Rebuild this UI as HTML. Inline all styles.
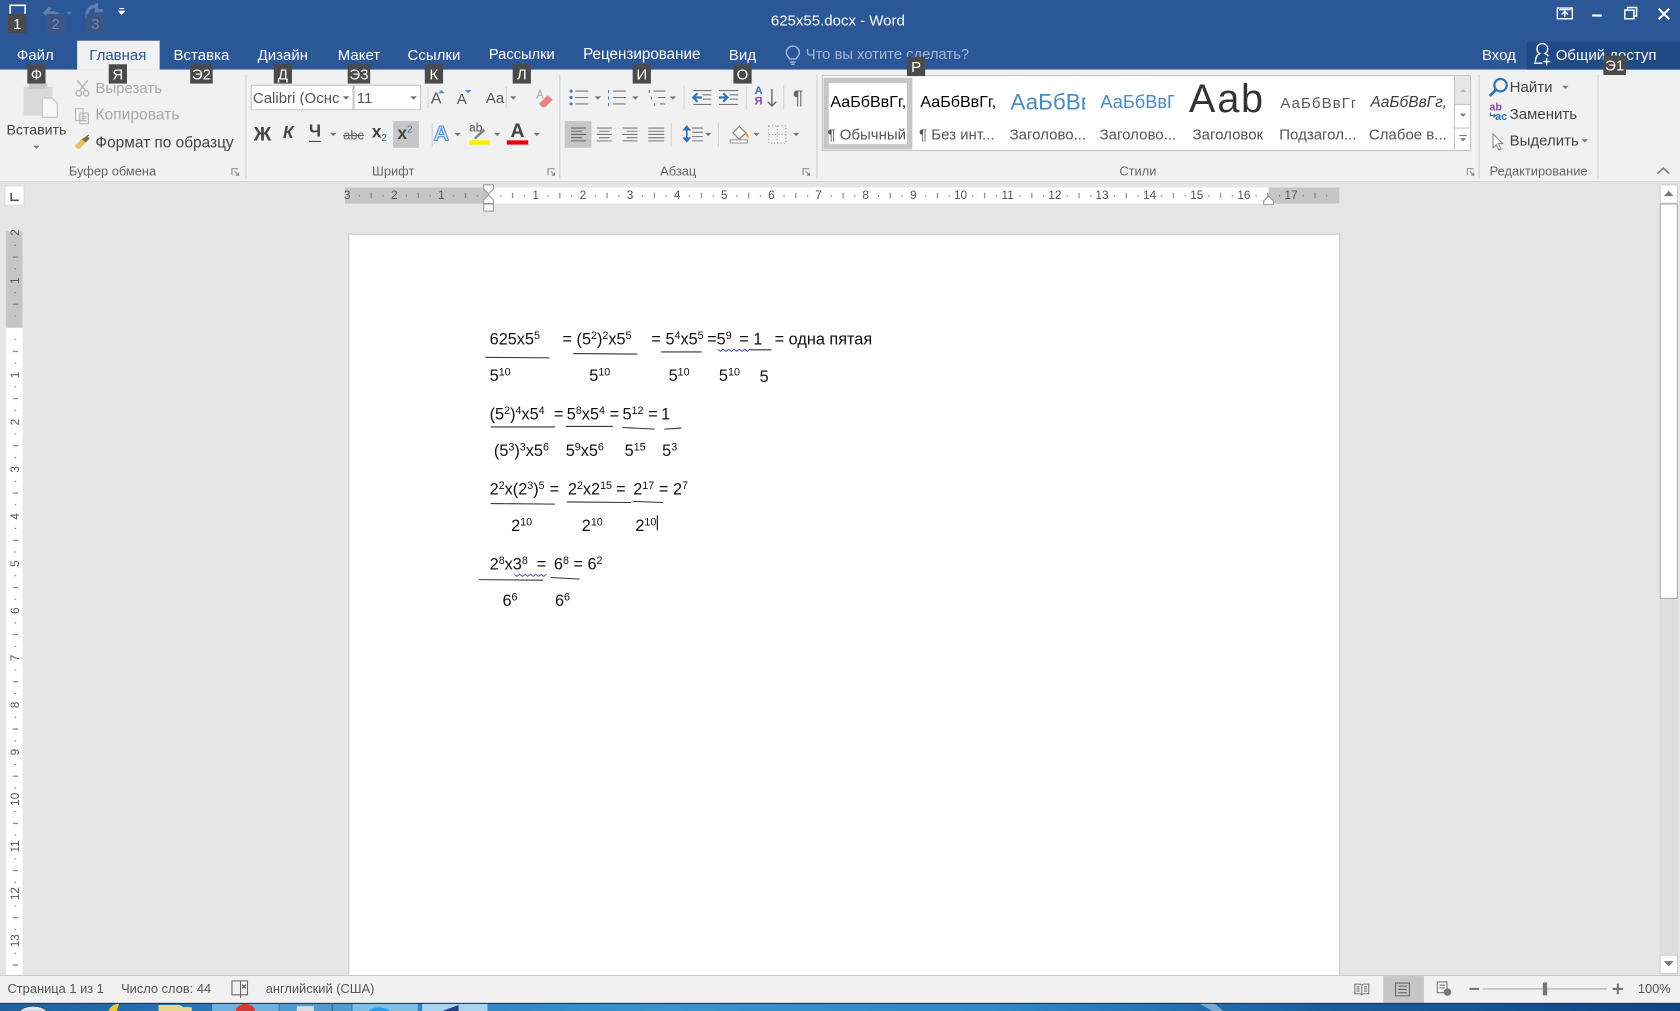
<!DOCTYPE html>
<html lang="ru"><head><meta charset="utf-8"><title>625x55.docx - Word</title>
<style>
html,body{margin:0;padding:0;width:1680px;height:1011px;overflow:hidden;background:#e6e6e6}
#root{position:absolute;left:0;top:0;width:1568px;height:944px;overflow:hidden;transform:scale(1.0714286);transform-origin:0 0;font-family:"Liberation Sans",sans-serif;color:#444;background:#e6e6e6}
.b{position:absolute}
.t,.l{position:absolute;white-space:nowrap;line-height:1}
.t{transform:translate(-50%,-50%)}
.l{transform:translateY(-50%)}
svg.o{position:absolute;left:0;top:0}
.tab{font-size:14px;color:#fff}
.k{position:absolute;transform:translate(-50%,-50%);background:#4a4a4a;color:#fff;font-size:14px;height:18px;line-height:18px;min-width:17px;text-align:center;white-space:nowrap}
.f{background:#3b5684;color:#6d87b0}
.g{font-size:12px;color:#666}
.s{font-size:14px;color:#555}
.dis{font-size:14px;color:#a9a9a9}
.d{position:absolute;white-space:nowrap;line-height:1;transform:translateY(-50%);font-size:15.200px;color:#111}
.d sup{font-size:10px;vertical-align:5px;line-height:0}
.rn{font-size:11px;color:#555}
.rv{font-size:11px;color:#555;transform:translate(-50%,-50%) rotate(-90deg)}
.st{font-size:12px;color:#555}
</style></head><body><div id="root">

<!-- title bar & ribbon backgrounds -->
<div class="b" style="left:0;top:0;width:1568px;height:65px;background:#2b5797"></div>
<div class="b" style="left:0;top:65px;width:1568px;height:104px;background:#f1f1f1"></div>
<div class="b" style="left:0;top:169px;width:1568px;height:1px;background:#d6d6d6"></div>
<div class="b" style="left:72px;top:38px;width:77px;height:27px;background:#f1f1f1"></div>
<div class="b" style="left:1425px;top:39px;width:143px;height:26px;background:#1f4a85"></div>

<!-- page -->
<div class="b" style="left:325px;top:218px;width:924px;height:693px;background:#fff;border:1px solid #c6c6c6;border-bottom:0"></div>

<!-- status & taskbar -->
<div class="b" style="left:0;top:910px;width:1568px;height:1px;background:#c8c8c8"></div>
<div class="b" style="left:0;top:911px;width:1568px;height:25px;background:#f1f1f1"></div>
<div class="b" style="left:1291px;top:911px;width:38px;height:25px;background:#c6c6c6"></div>
<div class="b" style="left:0;top:936px;width:1568px;height:8px;background:linear-gradient(90deg,#1d5f9f 0,#2a7ab8 15%,#3b93cc 40%,#2f87c4 60%,#1b5f9f 78%,#0f4584 100%);border-top:1px solid #0c2f55;box-sizing:border-box"></div>

<svg class="o" width="1568" height="944" viewBox="0 0 1568 944" fill="none">
<defs>
<pattern id="hp" patternUnits="userSpaceOnUse" x="456" y="176" width="44.05" height="16">
<rect x="11" y="6" width="1" height="1.500" fill="#777"/><rect x="22" y="4" width="1" height="5" fill="#777"/><rect x="33" y="6" width="1" height="1.500" fill="#777"/>
</pattern>
<pattern id="vp" patternUnits="userSpaceOnUse" x="6" y="305.500" width="15" height="44.05">
<rect x="7.500" y="11" width="1.500" height="1" fill="#777"/><rect x="6" y="22" width="5" height="1" fill="#777"/><rect x="7.500" y="33" width="1.500" height="1" fill="#777"/>
</pattern>
</defs>

<!-- quick access -->
<path d="M9.500 13V5h14v8" stroke="#fff" stroke-width="1.500"/>
<path d="M57 21c1-6-3-9-8-9h-6M47 7l-5 5 5 5" stroke="#5f80b0" stroke-width="3"/>
<path d="M62 11h5l-2.500 3z" fill="#5f80b0"/>
<path d="M82 18c-3-7 2-13 9-12M90 3v7h6" stroke="#5f80b0" stroke-width="3"/>
<path d="M111 8h5M111 10.500h5l-2.500 3z" stroke="#fff" fill="#fff" stroke-width="1"/>

<!-- window controls -->
<path d="M1453.500 7.500h14v10h-14z" stroke="#fff" stroke-width="1.300"/><path d="M1455 9h11M1460.500 16v-5M1457.500 13.500l3-3 3 3" stroke="#fff" stroke-width="1.300"/>
<path d="M1486 14.500h9" stroke="#fff" stroke-width="2"/>
<path d="M1516.500 9.500h8.500v8h-8.500zM1519 9.500V7h8.500v8H1525" stroke="#fff" stroke-width="1.400"/>
<path d="M1548 8l10 10M1558 8l-10 10" stroke="#fff" stroke-width="2"/>

<!-- bulb & share icons -->
<path d="M737 55c-1-2-3-3-3-6a6 6 0 0 1 12 0c0 3-2 4-3 6zM737.500 58h5M738.500 60h3" stroke="#a9bcd8" stroke-width="1.300"/>
<path d="M1433 58c0-5 2-7 4-8a5 5 0 1 1 5 0c1.500.5 2.500 1.300 3.200 2.500M1431.500 59h8" stroke="#fff" stroke-width="1.300"/>
<path d="M1443.500 54v7M1440 57.500h7" stroke="#fff" stroke-width="1.300"/>

<!-- separators -->
<path d="M229.500 70v97M522.500 70v97M762.500 70v97M1380.500 70v97M1491.500 70v97" stroke="#d0d0d0"/>
<path d="M399.500 81v20M472.500 81v20M638.500 80v22M696.500 80v22M731.500 80v22M403.500 115v22M626.500 115v22M670.500 115v22" stroke="#d4d4d4"/>

<!-- paste -->
<rect x="22" y="81" width="27" height="27" fill="#d9d9d9"/><rect x="27" y="78" width="17" height="5" fill="#c8c8c8"/>
<path d="M39.500 91.500h9l5 5v13h-14z" fill="#f7f7f7" stroke="#c4c4c4"/>
<path d="M31 136l3 3 3-3z" fill="#777"/>
<!-- scissors -->
<g stroke="#b4b4b4" stroke-width="1.300"><path d="M72 75l8 10M82 75l-8 10"/><circle cx="73.500" cy="87" r="2.500"/><circle cx="80.500" cy="87" r="2.500"/></g>
<!-- copy -->
<path d="M70.500 101.500h7v11h-7zM74.500 105.500h8v10h-8zM76 108.500h5M76 110.500h5M76 112.500h5" stroke="#b4b4b4"/>
<!-- brush -->
<path d="M72 139l-2-3 6-6 4 3-6 6z" fill="#e9c05c"/><path d="M76 130l5-3 3 2-4 4z" fill="#8a6d3b"/><path d="M80 128l3-2" stroke="#666"/>

<!-- combos -->
<rect x="234.500" y="79.500" width="95" height="23" fill="#fff" stroke="#c6c6c6"/>
<rect x="330.500" y="79.500" width="62" height="23" fill="#fff" stroke="#c6c6c6"/>
<path d="M320 90h6l-3 3zM383 90h6l-3 3z" fill="#666"/>
<path d="M409 87l3-3 3 3zM434 84h6l-3 3z" fill="#4a90d0"/>
<path d="M476 90h6l-3 3z" fill="#777"/>
<!-- eraser -->
<path d="M503 97l8-8 5 4-7 7h-3z" fill="#e9808a"/><path d="M501 92l3-8 3 8M502.500 89h3" stroke="#aaa"/>

<!-- row 2 font arrows + highlight box -->
<rect x="367" y="113" width="24" height="25" fill="#c6c6c6"/>
<path d="M308 124h6l-3 3zM424 124h6l-3 3zM461 124h6l-3 3zM498 124h6l-3 3z" fill="#777"/>
<rect x="438" y="131" width="19" height="4" fill="#ffec00"/>
<path d="M442 129l9-9 2 2-9 8z" fill="#888"/>
<rect x="473" y="131" width="20" height="4" fill="#e60012"/>

<!-- bullets -->
<g fill="#4a7fc1"><circle cx="533" cy="85" r="1.500"/><circle cx="533" cy="91" r="1.500"/><circle cx="533" cy="97" r="1.500"/></g>
<path d="M537 85h12M537 91h12M537 97h12" stroke="#777"/>
<path d="M555 90h6l-3 3zM590 90h6l-3 3zM625 90h6l-3 3z" fill="#777"/>
<path d="M568 84v3M568 90v3M568 96v3" stroke="#4a7fc1"/>
<path d="M572 85h12M572 91h12M572 97h12" stroke="#777"/>
<path d="M606 84v3" stroke="#4a7fc1"/><path d="M610 85h11M614 91h7M616 97h5" stroke="#777"/><path d="M608 90v3" stroke="#a060b0"/><path d="M611 96v3" stroke="#888"/>
<!-- indent -->
<path d="M647 91h8M651 87l-4 4 4 4" stroke="#2e74b5" stroke-width="2"/><path d="M647 84.500h17M656 88.500h8M656 92.500h8M647 97.500h17" stroke="#777"/>
<path d="M671 91h8M675 87l4 4-4 4" stroke="#2e74b5" stroke-width="2"/><path d="M671 84.500h18M681 88.500h8M681 92.500h8M671 97.500h18" stroke="#777"/>
<!-- sort arrow -->
<path d="M720.500 83v16M716.500 95l4 4 4-4" stroke="#666" stroke-width="1.300"/>
<!-- alignment -->
<rect x="527" y="113" width="25" height="25" fill="#c6c6c6"/>
<path d="M533 119.500h14M533 122.500h10M533 125.500h14M533 128.500h10M533 131.500h14" stroke="#666"/>
<path d="M557 119.500h14M559 122.500h10M557 125.500h14M559 128.500h10M557 131.500h14" stroke="#777"/>
<path d="M581 119.500h14M585 122.500h10M581 125.500h14M585 128.500h10M581 131.500h14" stroke="#777"/>
<path d="M605 119.500h15M605 122.500h15M605 125.500h15M605 128.500h15M605 131.500h15" stroke="#777"/>
<!-- line spacing -->
<path d="M641 118v14M638.500 121l2.500-3 2.500 3zM638.500 129l2.500 3 2.500-3z" stroke="#2e74b5" stroke-width="1.500" fill="#2e74b5"/>
<path d="M646 119.500h10M646 123.500h10M646 127.500h10M646 131.500h10" stroke="#777"/>
<path d="M658 124h6l-3 3z" fill="#777"/>
<!-- shading -->
<path d="M684 124l6-6 6 6-6 6z" stroke="#777" fill="#fff"/><path d="M696 124c1 2 2 3 2 4" stroke="#e8a33d" stroke-width="2"/>
<rect x="681.500" y="130.500" width="16" height="3" fill="#fff" stroke="#999"/>
<path d="M703 124h6l-3 3z" fill="#777"/>
<!-- borders -->
<path d="M717.500 117.500h16v16h-16zM725.500 117.500v16M717.500 125.500h16" stroke="#999" stroke-dasharray="1 2"/>
<path d="M740 124h6l-3 3z" fill="#777"/>

<!-- gallery -->
<rect x="767.500" y="70.500" width="605" height="70" fill="#fff" stroke="#c6c6c6"/>
<rect x="771" y="75" width="78" height="62" fill="#fff" stroke="#c6c6c6" stroke-width="5"/>
<rect x="1358" y="71" width="14" height="26" fill="#e6e6e6"/>
<path d="M1357.500 71v69M1358 97.500h15M1358 119.500h15" stroke="#c6c6c6"/>
<path d="M1362.500 86l3-3 3 3z" fill="#bbb"/><path d="M1362.500 106h6l-3 3z" fill="#777"/>
<path d="M1362 126.500h7" stroke="#777"/><path d="M1362.500 129h6l-3 3z" fill="#777"/>

<!-- editing icons -->
<circle cx="1400.500" cy="79.500" r="5.800" stroke="#2e74b5" stroke-width="2"/><path d="M1396 84l-5.500 5.500" stroke="#2e74b5" stroke-width="2.500"/>
<path d="M1391 105v3h5M1394 106.500l2 1.500-2 1.500" stroke="#2e74b5"/>
<path d="M1393.500 125v13l3-3 2.500 5 2-1-2.500-5h4z" stroke="#888" fill="#fff"/>
<path d="M1458 80h6l-3 3zM1476 130h6l-3 3z" fill="#777"/>

<!-- launchers -->
<g stroke="#888"><path d="M216.500 163.500v-6h6M219 160l3.500 3.500M220 163.500h2.500V161"/><path d="M511.500 163.500v-6h6M514 160l3.500 3.500M515 163.500h2.500V161"/><path d="M749.500 163.500v-6h6M752 160l3.500 3.500M753 163.500h2.500V161"/><path d="M1369.500 163.500v-6h6M1372 160l3.500 3.500M1373 163.500h2.500V161"/></g>
<path d="M1547 162l5.500-5 5.500 5" stroke="#777" stroke-width="1.500"/>

<!-- rulers -->
<rect x="4.500" y="173.500" width="18" height="18" fill="#fff" stroke="#dcdcdc"/>
<path d="M10.500 180v7h7" stroke="#555" stroke-width="1.500"/>
<rect x="322" y="175" width="134" height="15" fill="#c6c6c6"/>
<rect x="456" y="175" width="728" height="15" fill="#fff"/>
<rect x="1184" y="175" width="66" height="15" fill="#c6c6c6"/>
<rect x="322" y="175" width="928" height="15" fill="url(#hp)"/>
<rect x="5.500" y="216" width="15.500" height="90" fill="#c6c6c6"/>
<rect x="5.500" y="306" width="15.500" height="604" fill="#fff"/>
<rect x="5.500" y="216" width="15.500" height="694" fill="url(#vp)"/>
<path d="M451.500 172.500h9v4l-4.500 4.500-4.500-4.500z" fill="#fff" stroke="#999"/>
<path d="M456 182l4.500 4.500v3.500h-9v-3.500z" fill="#fff" stroke="#999"/>
<rect x="451.500" y="190.500" width="9" height="6.500" fill="#fff" stroke="#999"/>
<path d="M1184 183l4.500 4.500v3.500h-9v-3.500z" fill="#fff" stroke="#999"/>

<!-- scrollbar -->
<rect x="1549" y="172" width="17" height="738" fill="#dedede"/>
<rect x="1549.500" y="172.500" width="16" height="17" fill="#fff" stroke="#d0d0d0"/>
<path d="M1553 183l4.500-5 4.500 5z" fill="#777"/>
<rect x="1549.500" y="190.500" width="16" height="368" fill="#fff" stroke="#ababab"/>
<rect x="1549.500" y="891.500" width="16" height="17" fill="#fff" stroke="#d0d0d0"/>
<path d="M1553 897l4.500 5 4.500-5z" fill="#777"/>

<!-- doc fraction lines -->
<g stroke="#333" stroke-width="1">
<path d="M453 333.500l60 .5M535 330l60 .5M617 328.500h38M700 326.500h20"/>
<path d="M458 398.500h60M528 398h44M581 399l30 1.500M620 400.500l16-1"/>
<path d="M458 470l60 .5M529 468.500l60 .500M591 468l28 1"/>
<path d="M447 541l60 .5M514 539l27 1.500"/>
</g>
<path d="M670 326l2.500 2 2.500-2 2.500 2 2.500-2 2.500 2 2.500-2 2.500 2 2.500-2 2.500 2 2.500-2 2.500 2 2.500-2" stroke="#4a55a8" stroke-width=".9"/>
<path d="M480 536l2.500 2 2.500-2 2.500 2 2.500-2 2.500 2 2.500-2 2.500 2 2.500-2 2.500 2 2.500-2 2.500 2 2.500-2" stroke="#4a55a8" stroke-width=".9"/>
<path d="M613.500 481v14" stroke="#000"/>

<!-- status icons -->
<path d="M224.500 915.500h-8v13h8M224.500 915.500v16M224.500 915.500h6.500v13h-6.500" stroke="#666"/>
<path d="M226 919l3.500 3.500M229.500 919l-3.500 3.500" stroke="#666" stroke-width="1.300"/>
<path d="M1264.500 918.500h5.500l1 1 1-1h5.500v9h-5.500l-1 1-1-1h-5.500zM1271 919.500v8M1266 921h3M1266 923h3M1266 925h3M1273 921h3M1273 923h3M1273 925h3" stroke="#777"/>
<path d="M1302.500 917.500h13v12h-13zM1305 920.500h8M1305 923.500h8M1305 926.500h8" stroke="#666"/>
<path d="M1341.500 916.500h9v10h-9zM1343.500 919.500h5M1343.500 922h5" stroke="#777"/><circle cx="1351" cy="926" r="3.500" fill="#777"/>
<path d="M1371.500 923h9" stroke="#777" stroke-width="2"/>
<path d="M1384 923h116" stroke="#aaa"/>
<rect x="1440" y="917" width="4" height="12" fill="#777"/>
<path d="M1505 923h10M1510 918v10" stroke="#777" stroke-width="2"/>

<!-- taskbar hints -->
<g>
<rect x="198" y="937" width="62" height="7" fill="#6fb2de"/><rect x="261" y="937" width="67" height="7" fill="#4f9bcf"/><rect x="329" y="937" width="61" height="7" fill="#7fbfe6"/><rect x="394" y="937" width="61" height="7" fill="#a8d4ef"/>
<path d="M18 944a14 8 0 0 1 26 0z" fill="#dfe9f2" stroke="#27537f"/>
<path d="M101 944c2-5 6-7 10-7l-2 7z" fill="#e8c93a"/>
<path d="M148 944v-6h20l3 2h8v4z" fill="#e6d58a"/>
<path d="M220 944a9 7 0 0 1 18 0z" fill="#d23a3a"/>
<path d="M277 944v-5h16v5z" fill="#d5dde3"/><path d="M310 936v8" stroke="#555"/>
<path d="M344 944c2-5 17-5 20 0z" fill="#2c9ce8"/>
<path d="M412 944l16-6v6z" fill="#243f7d"/>
</g>
<path d="M1120 937l12 7h10l-8-7z" fill="#cfe6f5" opacity=".5"/>
</svg>

<!-- title -->
<div class="t" style="left:782px;top:19px;font-size:14px;color:#fff">625x55.docx - Word</div>

<!-- tabs -->
<div class="t tab" style="left:33px;top:51px">Файл</div>
<div class="t tab" style="left:110px;top:51px;color:#2b5797">Главная</div>
<div class="t tab" style="left:188px;top:51px">Вставка</div>
<div class="t tab" style="left:264px;top:51px">Дизайн</div>
<div class="t tab" style="left:335px;top:51px">Макет</div>
<div class="t tab" style="left:405px;top:51px">Ссылки</div>
<div class="t tab" style="left:487px;top:51px;font-size:13.700px">Рассылки</div>
<div class="t tab" style="left:599px;top:51px;font-size:14.200px">Рецензирование</div>
<div class="t tab" style="left:693px;top:51px">Вид</div>
<div class="l tab" style="left:752px;top:51px;color:#a4b7d3;font-size:13.800px">Что вы хотите сделать?</div>
<div class="t tab" style="left:1399px;top:51px">Вход</div>
<div class="l tab" style="left:1452px;top:51px">Общий доступ</div>

<!-- clipboard -->
<div class="t s" style="left:34px;top:121px;color:#444;font-size:13.200px">Вставить</div>
<div class="l dis" style="left:89px;top:82px">Вырезать</div>
<div class="l dis" style="left:89px;top:108px;font-size:14.600px">Копировать</div>
<div class="l s" style="left:89px;top:134px;color:#444;font-size:14.400px">Формат по образцу</div>
<div class="t g" style="left:105px;top:160px">Буфер обмена</div>
<div class="t g" style="left:367px;top:160px">Шрифт</div>
<div class="t g" style="left:633px;top:160px">Абзац</div>
<div class="t g" style="left:1062px;top:160px">Стили</div>
<div class="t g" style="left:1436px;top:160px">Редактирование</div>

<!-- font -->
<div class="l" style="left:236px;top:91px;font-size:14px;color:#555;width:82px;overflow:hidden">Calibri (Оснс</div>
<div class="l" style="left:333px;top:91px;font-size:14px;color:#555">11</div>
<div class="t" style="left:407px;top:92px;font-size:15px;color:#555">A</div>
<div class="t" style="left:431px;top:92px;font-size:14px;color:#555">A</div>
<div class="t" style="left:462px;top:91px;font-size:14px;color:#555">Aa</div>
<div class="t" style="left:245px;top:125px;font-size:18px;font-weight:bold;color:#444">Ж</div>
<div class="t" style="left:269px;top:125px;font-size:16px;font-weight:bold;font-style:italic;color:#444">К</div>
<div class="t" style="left:294px;top:124px;font-size:16px;font-weight:bold;color:#444;border-bottom:1.500px solid #444">Ч</div>
<div class="t" style="left:330px;top:126px;font-size:12px;color:#666;text-decoration:line-through">abc</div>
<div class="t" style="left:354px;top:125px;font-size:16px;font-weight:bold;color:#444">x<span style="font-size:9px;color:#2e74b5;font-weight:normal;vertical-align:-3px">2</span></div>
<div class="t" style="left:378px;top:125px;font-size:16px;font-weight:bold;color:#444">x<span style="font-size:9px;color:#2e74b5;font-weight:normal;vertical-align:6px">2</span></div>
<div class="t" style="left:412px;top:125px;font-size:20px;font-weight:bold;color:#d4e6f8;-webkit-text-stroke:1px #4a90d9">A</div>
<div class="t" style="left:444px;top:120px;font-size:11px;color:#555">ab</div>
<div class="t" style="left:483px;top:122px;font-size:18px;font-weight:bold;color:#444">A</div>

<!-- paragraph -->
<div class="t" style="left:708px;top:85px;font-size:10.500px;font-weight:bold;color:#2e74b5">А</div>
<div class="t" style="left:708px;top:95px;font-size:10.500px;font-weight:bold;color:#8a4bb0">Я</div>
<div class="t" style="left:745px;top:91px;font-size:18px;color:#666">¶</div>

<!-- styles -->
<div class="b" style="left:775px;top:84px;width:71px;overflow:hidden;font-size:15px;line-height:24px;white-space:nowrap;color:#000">АаБбВвГг,</div>
<div class="b" style="left:859px;top:84px;width:70px;overflow:hidden;font-size:15px;line-height:24px;white-space:nowrap;color:#000">АаБбВвГг,</div>
<div class="b" style="left:943px;top:80px;width:70px;overflow:hidden;font-size:21px;line-height:32px;white-space:nowrap;color:#4a8ac4">АаБбВв</div>
<div class="b" style="left:1027px;top:82px;width:69px;overflow:hidden;font-size:17px;line-height:28px;white-space:nowrap;color:#4a8ac4">АаБбВвГ</div>
<div class="t" style="left:1145px;top:92px;font-size:37px;color:#333;letter-spacing:1.500px">Ааb</div>
<div class="b" style="left:1195px;top:84px;width:70px;overflow:hidden;font-size:14px;letter-spacing:1px;line-height:24px;white-space:nowrap;color:#5a5a5a">АаБбВвГг</div>
<div class="b" style="left:1279px;top:84px;width:71px;overflow:hidden;font-size:14.500px;font-style:italic;line-height:24px;white-space:nowrap;color:#404040">АаБбВвГг,</div>
<div class="t s" style="left:809px;top:125px">¶ Обычный</div>
<div class="t s" style="left:893px;top:125px">¶ Без инт...</div>
<div class="t s" style="left:978px;top:125px">Заголово...</div>
<div class="t s" style="left:1062px;top:125px">Заголово...</div>
<div class="t s" style="left:1146px;top:125px">Заголовок</div>
<div class="t s" style="left:1230px;top:125px">Подзагол...</div>
<div class="t s" style="left:1314px;top:125px">Слабое в...</div>

<!-- editing -->
<div class="l s" style="left:1409px;top:81px;color:#444">Найти</div>
<div class="l s" style="left:1409px;top:106px;color:#444">Заменить</div>
<div class="l s" style="left:1409px;top:131px;color:#444">Выделить</div>
<div class="t" style="left:1396px;top:101px;font-size:10px;font-weight:bold;color:#8a4bb0">ab</div>
<div class="t" style="left:1401px;top:110px;font-size:10px;font-weight:bold;color:#2e74b5">ac</div>

<!-- key tips -->
<div class="k" style="left:16px;top:22px">1</div>
<div class="k f" style="left:52px;top:22px">2</div>
<div class="k f" style="left:89px;top:22px">3</div>
<div class="k" style="left:34px;top:69px">Ф</div>
<div class="k" style="left:110px;top:69px">Я</div>
<div class="k" style="left:188px;top:69px;width:21px">Э2</div>
<div class="k" style="left:264px;top:69px">Д</div>
<div class="k" style="left:335px;top:69px;width:21px">Э3</div>
<div class="k" style="left:405px;top:69px">К</div>
<div class="k" style="left:487px;top:69px">Л</div>
<div class="k" style="left:599px;top:69px">И</div>
<div class="k" style="left:693px;top:69px">О</div>
<div class="k" style="left:855px;top:62px">Р</div>
<div class="k" style="left:1507px;top:61px;width:21px">Э1</div>

<!-- h ruler numbers -->
<div class="t rn" style="left:324px;top:183px">3</div><div class="t rn" style="left:368px;top:183px">2</div><div class="t rn" style="left:412px;top:183px">1</div>
<div class="t rn" style="left:500px;top:183px">1</div><div class="t rn" style="left:544px;top:183px">2</div><div class="t rn" style="left:588px;top:183px">3</div><div class="t rn" style="left:632px;top:183px">4</div><div class="t rn" style="left:676px;top:183px">5</div><div class="t rn" style="left:720px;top:183px">6</div><div class="t rn" style="left:764px;top:183px">7</div><div class="t rn" style="left:808px;top:183px">8</div><div class="t rn" style="left:852.500px;top:183px">9</div><div class="t rn" style="left:896.500px;top:183px">10</div><div class="t rn" style="left:940.500px;top:183px">11</div><div class="t rn" style="left:984.500px;top:183px">12</div><div class="t rn" style="left:1028.500px;top:183px">13</div><div class="t rn" style="left:1073px;top:183px">14</div><div class="t rn" style="left:1117px;top:183px">15</div><div class="t rn" style="left:1161px;top:183px">16</div><div class="t rn" style="left:1205px;top:183px">17</div>

<!-- v ruler numbers -->
<div class="t rv" style="left:15px;top:217.400px">2</div><div class="t rv" style="left:15px;top:261.500px">1</div><div class="t rv" style="left:15px;top:349.500px">1</div><div class="t rv" style="left:15px;top:393.600px">2</div><div class="t rv" style="left:15px;top:437.600px">3</div><div class="t rv" style="left:15px;top:481.700px">4</div><div class="t rv" style="left:15px;top:525.700px">5</div><div class="t rv" style="left:15px;top:569.800px">6</div><div class="t rv" style="left:15px;top:613.800px">7</div><div class="t rv" style="left:15px;top:657.900px">8</div><div class="t rv" style="left:15px;top:702px">9</div><div class="t rv" style="left:15px;top:746px">10</div><div class="t rv" style="left:15px;top:790px">11</div><div class="t rv" style="left:15px;top:834px">12</div><div class="t rv" style="left:15px;top:878px">13</div>

<!-- document -->
<div class="d" style="left:457px;top:317px">625x5<sup>5</sup></div>
<div class="d" style="left:525px;top:317px">= (5<sup>2</sup>)<sup>2</sup>x5<sup>5</sup></div>
<div class="d" style="left:608px;top:317px">= 5<sup>4</sup>x5<sup>5</sup></div>
<div class="d" style="left:660px;top:317px">=5<sup>9</sup></div>
<div class="d" style="left:690px;top:317px">= 1</div>
<div class="d" style="left:723px;top:317px">= одна пятая</div>
<div class="d" style="left:457px;top:351px">5<sup>10</sup></div>
<div class="d" style="left:550px;top:351px">5<sup>10</sup></div>
<div class="d" style="left:624px;top:351px">5<sup>10</sup></div>
<div class="d" style="left:671px;top:351px">5<sup>10</sup></div>
<div class="d" style="left:709px;top:352px">5</div>

<div class="d" style="left:457px;top:387px">(5<sup>2</sup>)<sup>4</sup>x5<sup>4</sup></div>
<div class="d" style="left:517px;top:387px">=</div>
<div class="d" style="left:529px;top:387px">5<sup>8</sup>x5<sup>4</sup></div>
<div class="d" style="left:569px;top:387px">=</div>
<div class="d" style="left:581px;top:387px">5<sup>12</sup></div>
<div class="d" style="left:605px;top:387px">=</div>
<div class="d" style="left:617px;top:387px">1</div>
<div class="d" style="left:461px;top:421px">(5<sup>3</sup>)<sup>3</sup>x5<sup>6</sup></div>
<div class="d" style="left:528px;top:421px">5<sup>9</sup>x5<sup>6</sup></div>
<div class="d" style="left:583px;top:421px">5<sup>15</sup></div>
<div class="d" style="left:618px;top:421px">5<sup>3</sup></div>

<div class="d" style="left:457px;top:457px">2<sup>2</sup>x(2<sup>3</sup>)<sup>5</sup></div>
<div class="d" style="left:513px;top:457px">=</div>
<div class="d" style="left:530px;top:457px">2<sup>2</sup>x2<sup>15</sup></div>
<div class="d" style="left:575px;top:457px">=</div>
<div class="d" style="left:591px;top:457px">2<sup>17</sup></div>
<div class="d" style="left:615px;top:457px">= 2<sup>7</sup></div>
<div class="d" style="left:477px;top:491px">2<sup>10</sup></div>
<div class="d" style="left:543px;top:491px">2<sup>10</sup></div>
<div class="d" style="left:593px;top:491px">2<sup>10</sup></div>

<div class="d" style="left:457px;top:527px">2<sup>8</sup>x3<sup>8</sup></div>
<div class="d" style="left:501px;top:527px">=</div>
<div class="d" style="left:517px;top:527px">6<sup>8</sup> = 6<sup>2</sup></div>
<div class="d" style="left:469px;top:561px">6<sup>6</sup></div>
<div class="d" style="left:518px;top:561px">6<sup>6</sup></div>

<!-- status -->
<div class="l st" style="left:7px;top:923px">Страница 1 из 1</div>
<div class="l st" style="left:113px;top:923px">Число слов: 44</div>
<div class="l st" style="left:248px;top:923px">английский (США)</div>
<div class="t st" style="left:1544px;top:923px">100%</div>

</div></body></html>
